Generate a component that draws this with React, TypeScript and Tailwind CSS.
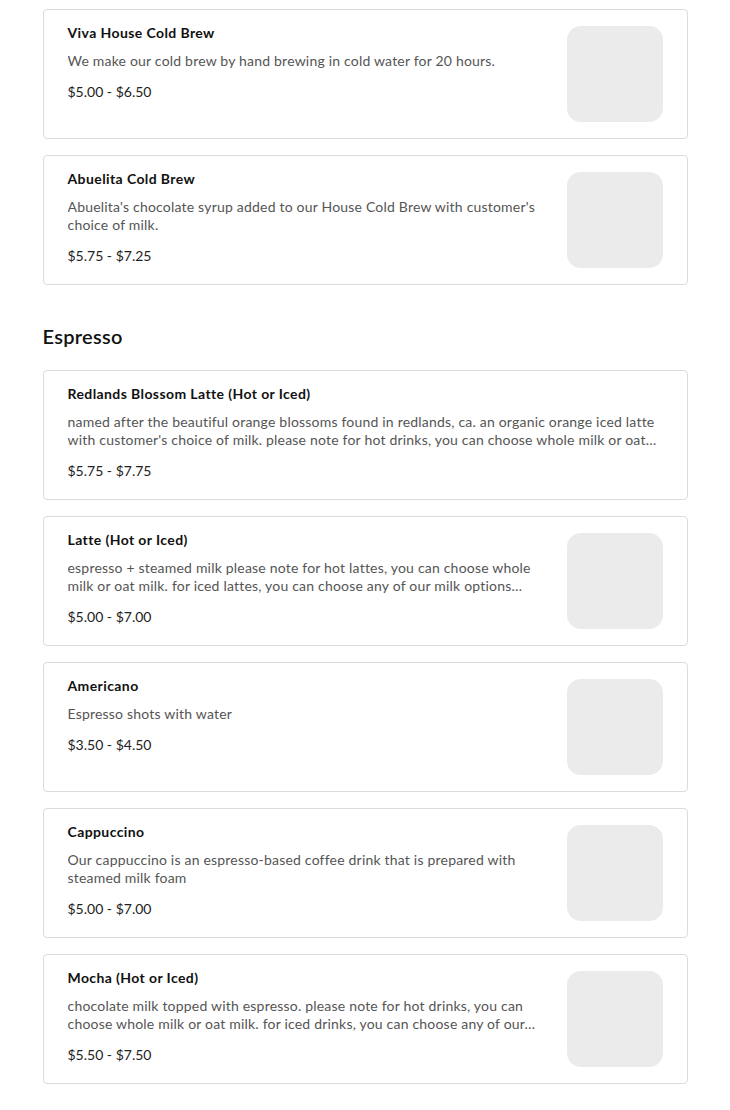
import React from "react";

type Item = { name: string; desc: string; price: string; img?: boolean };

const coldBrew: Item[] = [
  {
    name: "Viva House Cold Brew",
    desc: "We make our cold brew by hand brewing in cold water for 20 hours.",
    price: "$5.00 - $6.50",
    img: true,
  },
  {
    name: "Abuelita Cold Brew",
    desc: "Abuelita's chocolate syrup added to our House Cold Brew with customer's choice of milk.",
    price: "$5.75 - $7.25",
    img: true,
  },
];

const espresso: Item[] = [
  {
    name: "Redlands Blossom Latte (Hot or Iced)",
    desc: "named after the beautiful orange blossoms found in redlands, ca. an organic orange iced latte with customer's choice of milk. please note for hot drinks, you can choose whole milk or oat…",
    price: "$5.75 - $7.75",
  },
  {
    name: "Latte (Hot or Iced)",
    desc: "espresso + steamed milk please note for hot lattes, you can choose whole milk or oat milk. for iced lattes, you can choose any of our milk options…",
    price: "$5.00 - $7.00",
    img: true,
  },
  {
    name: "Americano",
    desc: "Espresso shots with water",
    price: "$3.50 - $4.50",
    img: true,
  },
  {
    name: "Cappuccino",
    desc: "Our cappuccino is an espresso-based coffee drink that is prepared with steamed milk foam",
    price: "$5.00 - $7.00",
    img: true,
  },
  {
    name: "Mocha (Hot or Iced)",
    desc: "chocolate milk topped with espresso. please note for hot drinks, you can choose whole milk or oat milk. for iced drinks, you can choose any of our…",
    price: "$5.50 - $7.50",
    img: true,
  },
];

function Card({ item }: { item: Item }) {
  return (
    <div className="flex min-h-[130px] rounded-[4px] border border-[#dcdcdc] bg-white pl-6 pr-6">
      <div className="flex min-w-0 flex-1 flex-col pt-[14px] pb-4">
        <div className="text-[14px] font-bold leading-[18px] tracking-[0.4px] text-[#111111]">{item.name}</div>
        <div className="mt-[10px] line-clamp-2 text-[14px] leading-[18px] tracking-[0.2px] text-[#555555]">{item.desc}</div>
        <div className="mt-[12px] text-[14px] leading-[20px] text-[#222222]">{item.price}</div>
      </div>
      {item.img && (
        <div className="ml-6 py-4">
          <div className="h-24 w-24 rounded-[14px] bg-[#ebebeb]" />
        </div>
      )}
    </div>
  );
}

export default function App() {
  return (
    <div className="min-h-[1110px] bg-white pt-[9px]" style={{ fontFamily: "Lato, 'Liberation Sans', sans-serif" }}>
      <div className="mx-auto w-[645px]">
        <div className="flex flex-col gap-4">
          {coldBrew.map((it) => (
            <Card key={it.name} item={it} />
          ))}
        </div>
        <h2 className="mt-[37px] mb-5 text-[20px] font-semibold leading-[28px] tracking-[0.3px] text-[#111111]">Espresso</h2>
        <div className="flex flex-col gap-4">
          {espresso.map((it) => (
            <Card key={it.name} item={it} />
          ))}
        </div>
      </div>
    </div>
  );
}
